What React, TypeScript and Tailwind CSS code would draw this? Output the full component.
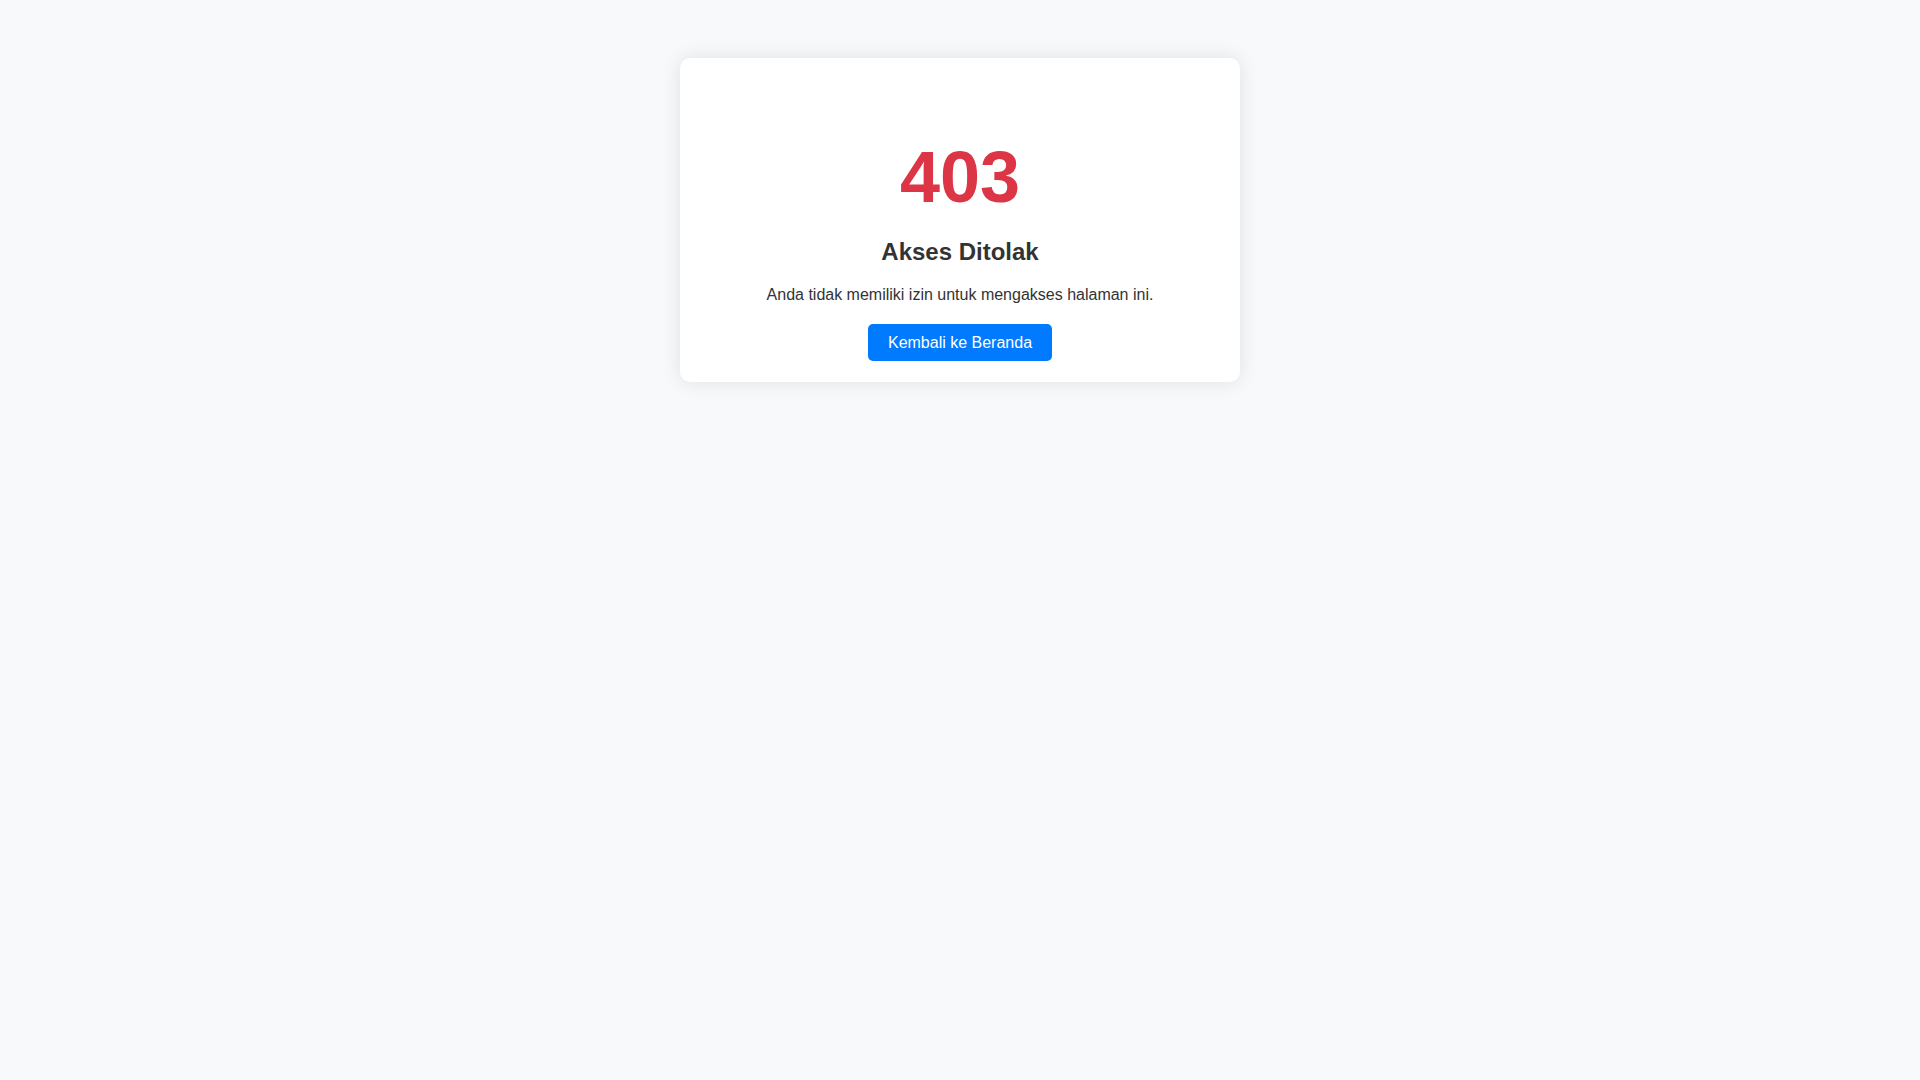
export default function App() {
  return (
    <main className="flex min-h-screen flex-col items-center bg-[#f8f9fa] px-4 pt-[58px] font-['Liberation_Sans',Arial,sans-serif] text-base text-[#333333]">
      <section className="w-full max-w-[560px] rounded-[10px] bg-white px-5 pt-[78px] pb-[30px] text-center shadow-[0_0_20px_rgba(0,0,0,0.1)]">
        <h1 className="text-[72px] leading-[82px] font-bold text-[#dc3545]">403</h1>
        <h2 className="mt-5 text-2xl leading-7 font-bold">Akses Ditolak</h2>
        <p className="mt-5 leading-[18px]">Anda tidak memiliki izin untuk mengakses halaman ini.</p>
        <div className="mt-[30px] leading-[18px]">
          <a href="/" className="rounded-[5px] bg-[#007bff] px-5 py-2.5 text-white">
            Kembali ke Beranda
          </a>
        </div>
      </section>
    </main>
  );
}
